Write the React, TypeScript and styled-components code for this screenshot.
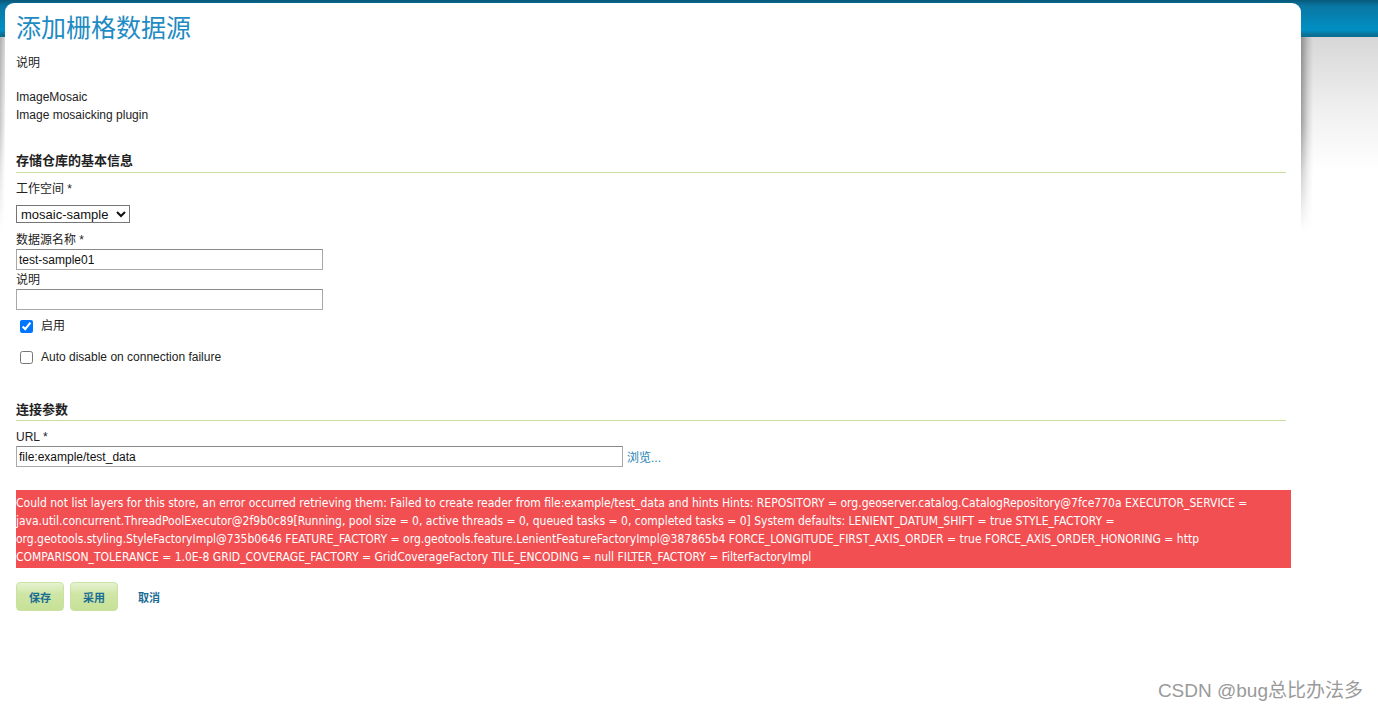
import React, { useState } from 'react';
import styled, { createGlobalStyle } from 'styled-components';

const GlobalStyle = createGlobalStyle`
  html, body {
    margin: 0;
    padding: 0;
  }
  body {
    font-family: "Liberation Sans", "Noto Sans CJK SC", sans-serif;
    font-size: 12px;
    color: #222;
  }
`;

const Page = styled.div`
  position: relative;
  isolation: isolate;
  min-height: 710px;
  background: linear-gradient(
      to bottom,
      #07597a 0,
      #0a77a3 6px,
      #0090c4 30px,
      #0a6f95 35px,
      #0a6f95 37px,
      #d7d7d7 37px,
      #f0f0f0 110px,
      #ffffff 170px
    )
    no-repeat;
  padding: 3px 0 0 5px;
  box-sizing: border-box;
  overflow: hidden;
`;

const Panel = styled.div`
  position: relative;
  width: 1296px;
  min-height: 707px;
  box-sizing: border-box;
  padding: 11px 15px 0 11px;
  background: #fff;
  border-radius: 9px 9px 0 0;

  &::before {
    content: '';
    position: absolute;
    top: 34px;
    left: -6px;
    right: -12px;
    height: 195px;
    z-index: -1;
    background: linear-gradient(
      to right,
      rgba(0, 0, 0, 0.22),
      rgba(0, 0, 0, 0) 6px,
      rgba(0, 0, 0, 0) calc(100% - 12px),
      rgba(0, 0, 0, 0.34) calc(100% - 12px),
      rgba(0, 0, 0, 0.1) calc(100% - 5px),
      rgba(0, 0, 0, 0) 100%
    );
    -webkit-mask-image: linear-gradient(to bottom, #000 45%, transparent 100%);
    mask-image: linear-gradient(to bottom, #000 45%, transparent 100%);
  }
`;

const Title = styled.h1`
  margin: 0;
  font-family: "DejaVu Sans", "Noto Sans CJK SC", sans-serif;
  font-weight: normal;
  font-size: 25px;
  line-height: 30px;
  color: #1f8bc3;
`;

const Text = styled.p<{ $top?: number }>`
  margin: ${(p) => p.$top ?? 0}px 0 0;
  line-height: 18px;
  font-size: 12px;
`;

const SectionTitle = styled.h3<{ $top: number; $gap?: number }>`
  margin: ${(p) => p.$top}px 0 0;
  padding-bottom: ${(p) => p.$gap ?? 2}px;
  border-bottom: 1px solid #c5e09b;
  font-size: 13px;
  font-weight: bold;
  line-height: 18px;
  color: #222;
`;

const Label = styled.label<{ $top: number }>`
  display: block;
  margin-top: ${(p) => p.$top}px;
  line-height: 18px;
`;

const Select = styled.select`
  display: block;
  margin-top: 7px;
  width: 114px;
  height: 18px;
  font-family: "Liberation Sans", sans-serif;
  font-size: 13px;
  color: #111;
  border: 1px solid #767676;
  border-radius: 0;
  background: #fff;
  padding: 0;
`;

const TextInput = styled.input<{ $width: number; $top: number }>`
  display: block;
  box-sizing: border-box;
  margin-top: ${(p) => p.$top}px;
  width: ${(p) => p.$width}px;
  height: 21px;
  padding: 0 2px;
  font-family: "Liberation Sans", sans-serif;
  font-size: 12px;
  color: #111;
  border: 1px solid #a9a9a9;
  border-top-color: #8a8a8a;
  outline: none;
`;

const CheckRow = styled.label<{ $top: number }>`
  display: flex;
  align-items: center;
  gap: 8px;
  margin-top: ${(p) => p.$top}px;
  padding-left: 4px;
  height: 18px;
  line-height: 18px;

  input {
    margin: 0;
    width: 13px;
    height: 13px;
  }
`;

const UrlRow = styled.div`
  display: flex;
  align-items: center;
  gap: 4px;
`;

const BrowseLink = styled.a`
  color: #1d7fb3;
  text-decoration: none;
  font-size: 12px;
  cursor: pointer;
`;

const ErrorBox = styled.div`
  margin-top: 23px;
  width: 1275px;
  box-sizing: border-box;
  padding: 4px 6px 2px 0;
  background: #f24f53;
  color: #fff;
  font-family: "Liberation Sans Narrow", "DejaVu Sans Condensed", "Liberation Sans", sans-serif;
  font-size: 12px;
  line-height: 18px;
`;

const Buttons = styled.div`
  display: flex;
  align-items: center;
  gap: 6px;
  margin-top: 14px;
`;

const Button = styled.button`
  width: 48px;
  height: 29px;
  padding: 0;
  border: 1px solid #c9e2a2;
  border-radius: 4px;
  background: linear-gradient(to bottom, #e6f2d2 0, #cfe6a6 40%, #c6e197 100%);
  color: #1b6c94;
  font-family: "Noto Sans CJK SC", sans-serif;
  font-size: 11px;
  font-weight: bold;
  cursor: pointer;
`;

const CancelLink = styled.a`
  margin-left: 14px;
  color: #1b6c94;
  font-family: "Noto Sans CJK SC", sans-serif;
  font-size: 11px;
  font-weight: bold;
  cursor: pointer;
`;

const Watermark = styled.div`
  position: absolute;
  right: 15px;
  bottom: 8px;
  font-family: "Liberation Sans", "Noto Sans CJK SC", sans-serif;
  font-size: 19px;
  color: #9a9a9a;
`;

const errorText =
  'Could not list layers for this store, an error occurred retrieving them: Failed to create reader from file:example/test_data and hints Hints: REPOSITORY = org.geoserver.catalog.CatalogRepository@7fce770a EXECUTOR_SERVICE = java.util.concurrent.ThreadPoolExecutor@2f9b0c89[Running, pool size = 0, active threads = 0, queued tasks = 0, completed tasks = 0] System defaults: LENIENT_DATUM_SHIFT = true STYLE_FACTORY = org.geotools.styling.StyleFactoryImpl@735b0646 FEATURE_FACTORY = org.geotools.feature.LenientFeatureFactoryImpl@387865b4 FORCE_LONGITUDE_FIRST_AXIS_ORDER = true FORCE_AXIS_ORDER_HONORING = http COMPARISON_TOLERANCE = 1.0E-8 GRID_COVERAGE_FACTORY = GridCoverageFactory TILE_ENCODING = null FILTER_FACTORY = FilterFactoryImpl';

const App: React.FC = () => {
  const [workspace, setWorkspace] = useState('mosaic-sample');
  const [name, setName] = useState('test-sample01');
  const [desc, setDesc] = useState('');
  const [enabled, setEnabled] = useState(true);
  const [autoDisable, setAutoDisable] = useState(false);
  const [url, setUrl] = useState('file:example/test_data');

  return (
    <Page>
      <GlobalStyle />
      <Panel>
        <Title>添加栅格数据源</Title>
        <Text $top={10}>说明</Text>
        <Text $top={16}>ImageMosaic</Text>
        <Text>Image mosaicking plugin</Text>

        <SectionTitle $top={28}>存储仓库的基本信息</SectionTitle>
        <Label $top={7}>工作空间 *</Label>
        <Select value={workspace} onChange={(e) => setWorkspace(e.target.value)}>
          <option value="mosaic-sample">mosaic-sample</option>
        </Select>
        <Label $top={8}>数据源名称 *</Label>
        <TextInput
          $top={0}
          $width={307}
          value={name}
          onChange={(e) => setName(e.target.value)}
        />
        <Label $top={1}>说明</Label>
        <TextInput
          $top={0}
          $width={307}
          value={desc}
          onChange={(e) => setDesc(e.target.value)}
        />
        <CheckRow $top={7}>
          <input
            type="checkbox"
            checked={enabled}
            onChange={(e) => setEnabled(e.target.checked)}
          />
          启用
        </CheckRow>
        <CheckRow $top={13}>
          <input
            type="checkbox"
            checked={autoDisable}
            onChange={(e) => setAutoDisable(e.target.checked)}
          />
          Auto disable on connection failure
        </CheckRow>

        <SectionTitle $top={35} $gap={1}>连接参数</SectionTitle>
        <Label $top={7}>URL *</Label>
        <UrlRow>
          <TextInput
            $top={0}
            $width={607}
            value={url}
            onChange={(e) => setUrl(e.target.value)}
          />
          <BrowseLink>浏览...</BrowseLink>
        </UrlRow>

        <ErrorBox>{errorText}</ErrorBox>

        <Buttons>
          <Button>保存</Button>
          <Button>采用</Button>
          <CancelLink>取消</CancelLink>
        </Buttons>
      </Panel>
      <Watermark>CSDN @bug总比办法多</Watermark>
    </Page>
  );
};

export default App;
